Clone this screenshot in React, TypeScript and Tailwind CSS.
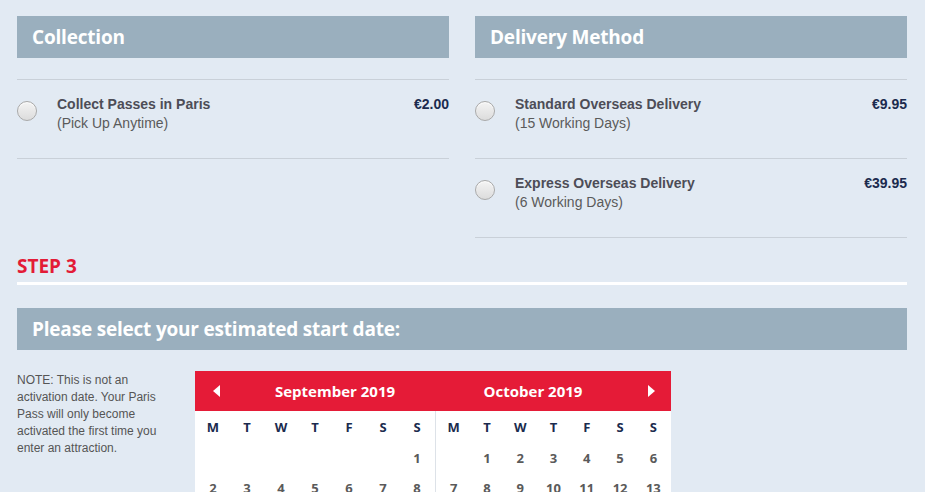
import React from "react";

const heading = { fontFamily: '"Open Sans", "Segoe UI", sans-serif' };
const body = { fontFamily: '"Liberation Sans", Arial, sans-serif' };

function Radio() {
  return (
    <div className="h-[20px] w-[20px] shrink-0 rounded-full border border-[#a9a9a9] bg-[linear-gradient(#f4f4f4,#dcdcdc)] shadow-[inset_0_1px_1px_rgba(255,255,255,0.8)]" />
  );
}

function Option({ title, sub, price }: { title: string; sub: string; price: string }) {
  return (
    <div className="flex h-[79px] border-b border-[#c9d0d8] pt-[15px]">
      <div className="pt-[6px]">
        <Radio />
      </div>
      <div className="ml-[20px] flex-1 text-[14px] leading-[19px]" style={body}>
        <div className="font-bold text-[#4d4d57]">{title}</div>
        <div className="text-[#5a5a5a]">{sub}</div>
      </div>
      <div className="text-[14px] font-bold leading-[19px] text-[#1b2b4e]" style={body}>
        {price}
      </div>
    </div>
  );
}

function Bar({ children }: { children: React.ReactNode }) {
  return (
    <div
      className="flex h-[42px] items-center bg-[#9aafbe] pl-[15px] text-[19px] font-bold tracking-[-0.2px] text-white"
      style={heading}
    >
      {children}
    </div>
  );
}

const days = ["M", "T", "W", "T", "F", "S", "S"];

function Month({
  title,
  rows,
  side,
}: {
  title: string;
  rows: (number | null)[][];
  side: "left" | "right";
}) {
  return (
    <div className={side === "left" ? "w-[240px]" : "w-[236px]"}>
      <div className="flex h-[40px] items-center bg-[#e51b37] text-white" style={heading}>
        {side === "left" ? (
          <div className="flex w-[40px] justify-center pl-[2px]">
            <div className="h-0 w-0 border-y-[6px] border-r-[7px] border-y-transparent border-r-white" />
          </div>
        ) : null}
        <div className="flex-1 text-center text-[15px] font-bold">{title}</div>
        {side === "right" ? (
          <div className="flex w-[40px] justify-center">
            <div className="h-0 w-0 border-y-[6px] border-l-[7px] border-y-transparent border-l-white" />
          </div>
        ) : null}
      </div>
      <div
        className={
          side === "left"
            ? "bg-white px-[1px]"
            : "border-l border-[#dde2e8] bg-white px-[1px]"
        }
        style={heading}
      >
        <div className="grid h-[33px] grid-cols-7 items-center text-center text-[13px] font-bold text-[#1b2b4e]">
          {days.map((d, i) => (
            <div key={i}>{d}</div>
          ))}
        </div>
        {rows.map((r, ri) => (
          <div
            key={ri}
            className="grid h-[30px] grid-cols-7 items-center text-center text-[13px] font-bold text-[#5a5a5a]"
          >
            {r.map((d, i) => (
              <div key={i}>{d ?? ""}</div>
            ))}
          </div>
        ))}
      </div>
    </div>
  );
}

export default function App() {
  return (
    <div className="h-[492px] w-[925px] overflow-hidden bg-[#e2eaf3] px-[17px] pt-[16px] pr-[18px]">
      <div className="flex gap-[26px]">
        <div className="w-[432px]">
          <Bar>Collection</Bar>
          <div className="mt-[21px] border-t border-[#c9d0d8]">
            <Option title="Collect Passes in Paris" sub="(Pick Up Anytime)" price="€2.00" />
          </div>
        </div>
        <div className="w-[432px]">
          <Bar>Delivery Method</Bar>
          <div className="mt-[21px] border-t border-[#c9d0d8]">
            <Option title="Standard Overseas Delivery" sub="(15 Working Days)" price="€9.95" />
            <Option title="Express Overseas Delivery" sub="(6 Working Days)" price="€39.95" />
          </div>
        </div>
      </div>

      <div
        className="mt-[14px] text-[19px] font-bold leading-[28px] text-[#e31b37]"
        style={heading}
      >
        STEP 3
      </div>
      <div className="mt-[2px] h-[3px] bg-white" />

      <div className="mt-[23px]">
        <Bar>Please select your estimated start date:</Bar>
      </div>

      <div className="mt-[21px] flex">
        <div className="w-[160px] pt-[1px] text-[12px] leading-[17px] text-[#555]" style={body}>
          NOTE: This is not an activation date. Your Paris Pass will only become activated the first time
          you enter an attraction.
        </div>
        <div className="ml-[18px] flex">
          <Month
            title="September 2019"
            side="left"
            rows={[
              [null, null, null, null, null, null, 1],
              [2, 3, 4, 5, 6, 7, 8],
            ]}
          />
          <Month
            title="October 2019"
            side="right"
            rows={[
              [null, 1, 2, 3, 4, 5, 6],
              [7, 8, 9, 10, 11, 12, 13],
            ]}
          />
        </div>
      </div>
    </div>
  );
}
